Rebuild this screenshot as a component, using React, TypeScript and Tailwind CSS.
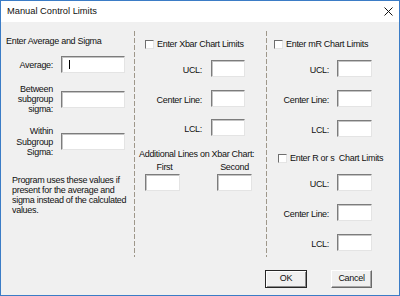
import React from "react";

const font = { fontFamily: '"Liberation Sans", Arial, sans-serif' };

function Box({ w = "w-[34px]", children }: { w?: string; children?: React.ReactNode }) {
  return (
    <div
      className={`${w} h-[17px] shrink-0 bg-white border border-t-[#7c7c7c] border-l-[#7c7c7c] border-r-[#e4e4e4] border-b-[#e4e4e4] shadow-[inset_1px_1px_0_#c4c4c4] flex items-center pl-[7px]`}
    >
      {children}
    </div>
  );
}

function Check() {
  return (
    <div className="w-[9px] h-[9px] shrink-0 bg-white border border-t-[#6e6e6e] border-l-[#6e6e6e] border-r-[#e4e4e4] border-b-[#e4e4e4]" />
  );
}

function Row({
  label,
  lw,
  gap,
  boxW,
  className = "",
}: {
  label: string;
  lw: string;
  gap: string;
  boxW: string;
  className?: string;
}) {
  return (
    <div className={`flex items-center ${gap} ${className}`}>
      <div className={`${lw} text-right leading-[10px] pt-[2px]`}>{label}</div>
      <Box w={boxW} />
    </div>
  );
}

function Sep() {
  return (
    <div className="w-px mt-[9px] h-[226px] shrink-0 bg-[image:repeating-linear-gradient(to_bottom,#9e978a_0px,#9e978a_5px,transparent_5px,transparent_7px)]" />
  );
}

export default function App() {
  return (
    <div
      className="w-[400px] h-[296px] border border-[#3b7cc6] bg-[#f0f0f0] flex flex-col text-[#111] text-[9px] tracking-[-0.3px]"
      style={font}
    >
      {/* Title bar */}
      <div className="h-[21px] bg-white flex items-center justify-between">
        <div className="pl-[6px] text-[9.3px] tracking-normal">Manual Control Limits</div>
        <svg width="9" height="9" viewBox="0 0 9 9" className="mr-[6px]">
          <path d="M0.5 0.5 L8.5 8.5 M8.5 0.5 L0.5 8.5" stroke="#111" strokeWidth="1" />
        </svg>
      </div>

      {/* Columns */}
      <div className="flex h-[236px]">
        {/* Column 1 */}
        <div className="w-[133px] shrink-0 flex flex-col pt-[14px]">
          <div className="pl-[5px] leading-[10px]">Enter Average and Sigma</div>
          <div className="flex items-center gap-[8px] mt-[10px]">
            <div className="w-[52px] text-right leading-[10px]">Average:</div>
            <Box w="w-[64px]">
              <span className="w-px h-[9px] bg-black" />
            </Box>
          </div>
          <div className="flex items-center gap-[8px] mt-[11px]">
            <div className="w-[52px] text-right leading-[10px]">
              Between
              <br />
              subgroup
              <br />
              sigma:
            </div>
            <Box w="w-[64px]" />
          </div>
          <div className="flex items-center gap-[8px] mt-[12px]">
            <div className="w-[52px] text-right leading-[10.5px]">
              Within
              <br />
              Subgroup
              <br />
              Sigma:
            </div>
            <Box w="w-[64px]" />
          </div>
          <div className="pl-[11px] mt-[17px] leading-[10px]">
            Program uses these values if
            <br />
            present for the average and
            <br />
            sigma instead of the calculated
            <br />
            values.
          </div>
        </div>

        <Sep />

        {/* Column 2 */}
        <div className="w-[131px] shrink-0 flex flex-col pt-[17px]">
          <div className="flex items-center gap-[3px] pl-[10px] h-[10px]">
            <Check />
            <span className="leading-[10px]">Enter Xbar Chart Limits</span>
          </div>
          <Row label="UCL:" lw="w-[67px]" gap="gap-[9px]" boxW="w-[34px]" className="mt-[11px]" />
          <Row label="Center Line:" lw="w-[67px]" gap="gap-[9px]" boxW="w-[34px]" className="mt-[13px]" />
          <Row label="LCL:" lw="w-[67px]" gap="gap-[9px]" boxW="w-[34px]" className="mt-[12px]" />
          <div className="pl-[4px] mt-[13px] leading-[10px]">Additional Lines on Xbar Chart:</div>
          <div className="flex pl-[10px] gap-[37px] mt-[3px]">
            <div className="w-[35px] flex flex-col items-center">
              <div className="leading-[10px] pl-[4px]">First</div>
              <div className="mt-[2px]">
                <Box w="w-[35px]" />
              </div>
            </div>
            <div className="w-[35px] flex flex-col items-center">
              <div className="leading-[10px]">Second</div>
              <div className="mt-[2px]">
                <Box w="w-[35px]" />
              </div>
            </div>
          </div>
        </div>

        <Sep />

        {/* Column 3 */}
        <div className="flex-1 flex flex-col pt-[17px]">
          <div className="flex items-center gap-[3px] pl-[7px] h-[10px]">
            <Check />
            <span className="leading-[10px]">Enter mR Chart Limits</span>
          </div>
          <Row label="UCL:" lw="w-[62px]" gap="gap-[8px]" boxW="w-[35px]" className="mt-[11px]" />
          <Row label="Center Line:" lw="w-[62px]" gap="gap-[8px]" boxW="w-[35px]" className="mt-[13px]" />
          <Row label="LCL:" lw="w-[62px]" gap="gap-[8px]" boxW="w-[35px]" className="mt-[13px]" />
          <div className="flex items-center gap-[3px] pl-[11px] h-[10px] mt-[16px]">
            <Check />
            <span className="leading-[10px] whitespace-pre">Enter R or s  Chart Limits</span>
          </div>
          <Row label="UCL:" lw="w-[62px]" gap="gap-[8px]" boxW="w-[35px]" className="mt-[11px]" />
          <Row label="Center Line:" lw="w-[62px]" gap="gap-[8px]" boxW="w-[35px]" className="mt-[13px]" />
          <Row label="LCL:" lw="w-[62px]" gap="gap-[8px]" boxW="w-[35px]" className="mt-[13px]" />
        </div>
      </div>

      {/* Buttons */}
      <div className="flex pl-[264px] gap-[24px] mt-[12px]">
        <div className="w-[42px] h-[18px] flex items-center justify-center border border-[#262626] shadow-[inset_1px_1px_0_#ffffff,inset_-1px_-1px_0_#8c8c8c] bg-[#f0f0f0]">
          OK
        </div>
        <div className="w-[41px] h-[18px] flex items-center justify-center border border-t-[#ffffff] border-l-[#ffffff] border-r-[#6a6a6a] border-b-[#6a6a6a] shadow-[inset_-1px_-1px_0_#a8a8a8] bg-[#f0f0f0]">
          Cancel
        </div>
      </div>
    </div>
  );
}
